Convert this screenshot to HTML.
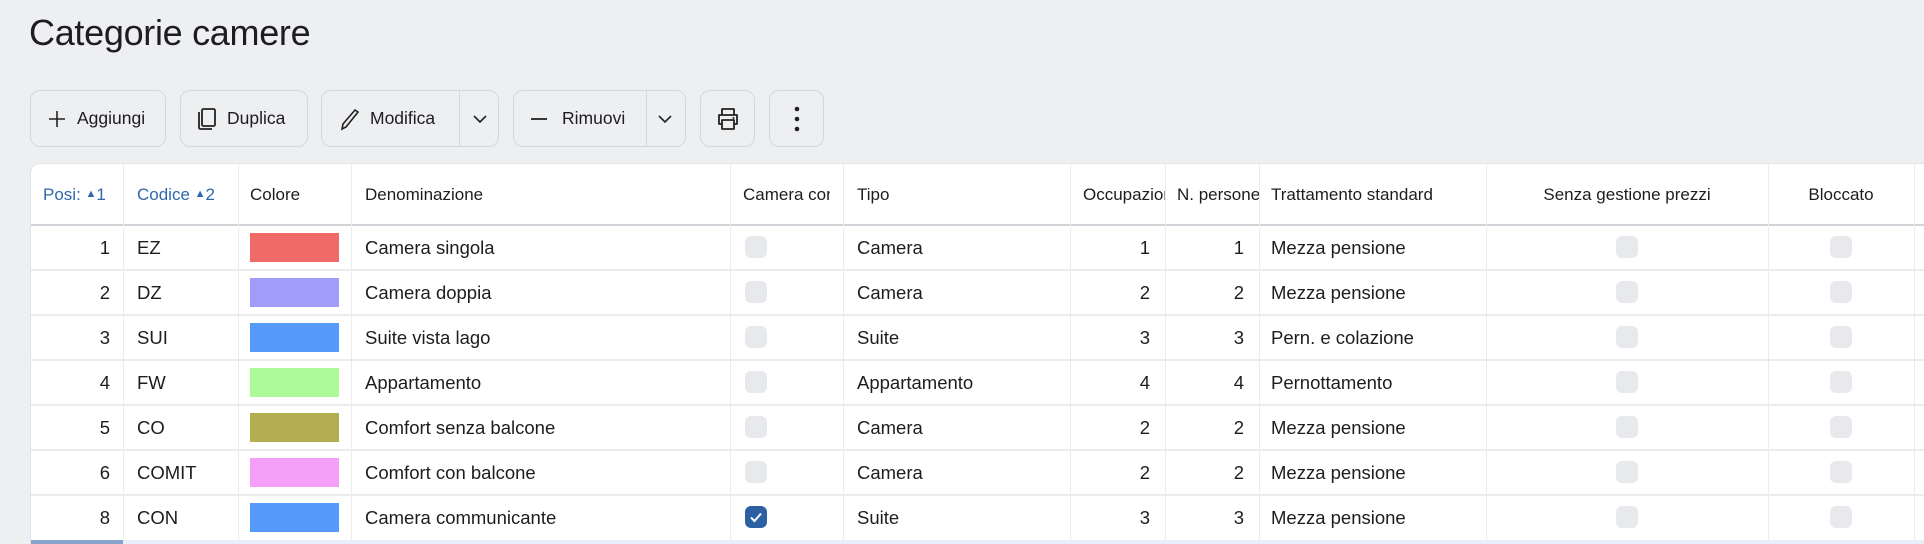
<!DOCTYPE html>
<html><head><meta charset="utf-8"><style>
*{box-sizing:border-box;margin:0;padding:0}
html,body{width:1924px;height:544px;overflow:hidden}
body{background:#eeeff1;font-family:"Liberation Sans",sans-serif;color:#1d1d1f;position:relative}
h1{position:absolute;left:29px;top:12px;font-size:36px;font-weight:400;letter-spacing:-0.3px}
.btn{position:absolute;top:90px;height:57px;border:1px solid #d6d7db;border-radius:10px;background:#eeeff1;display:flex;align-items:center;font-size:17.5px}
.btn svg{flex:none}
.div{position:absolute;top:0;bottom:0;width:1px;background:#d6d7db}
.tbl{position:absolute;left:30px;top:163px;width:1900px;height:381px;overflow:hidden;background:#fff;border-top-left-radius:10px;border:1px solid #e3e3e6;border-bottom:none}
.c{position:absolute;font-size:18.5px;white-space:nowrap;overflow:hidden}
.h{position:absolute;font-size:17px;white-space:nowrap;overflow:hidden;top:0;height:61px;line-height:61px}
.vl{position:absolute;width:1px;background:#ececef;top:0;height:380px}
.hl{position:absolute;left:0;right:0;height:2px;background:#ececef}
.sw{position:absolute;width:89px;height:29px}
.cb{position:absolute;width:22px;height:22px;border-radius:6px;background:#e8e9ed}
</style></head><body>
<h1>Categorie camere</h1>

<div class="btn" style="left:30px;width:136px;padding-left:16px;gap:10px">
<svg width="20" height="20" viewBox="0 0 20 20"><path d="M10 2v16M2 10h16" stroke="#222" stroke-width="1.6"/></svg>Aggiungi</div>
<div class="btn" style="left:180px;width:128px;padding-left:16px;gap:10px">
<svg width="20" height="24" viewBox="0 0 20 24"><rect x="5" y="2" width="13" height="17" rx="1.5" fill="none" stroke="#222" stroke-width="1.8"/><path d="M2 5v15.5a1.5 1.5 0 0 0 1.5 1.5H15" fill="none" stroke="#222" stroke-width="1.8"/></svg>Duplica</div>
<div class="btn" style="left:321px;width:178px;padding-left:16px;gap:10px">
<svg width="22" height="24" viewBox="0 0 22 24"><path d="M4 22l1-5L17 3l3 2L8 20z" fill="none" stroke="#222" stroke-width="1.6"/></svg>Modifica
<div class="div" style="left:137px"></div>
<svg style="position:absolute;left:150px;top:22px" width="16" height="12" viewBox="0 0 16 12"><path d="M2 3l6 6 6-6" fill="none" stroke="#222" stroke-width="1.6"/></svg></div>
<div class="btn" style="left:513px;width:173px;padding-left:16px;gap:14px">
<svg width="18" height="20" viewBox="0 0 18 20"><path d="M1 10h16" stroke="#222" stroke-width="1.8"/></svg>Rimuovi
<div class="div" style="left:132px"></div>
<svg style="position:absolute;left:143px;top:22px" width="16" height="12" viewBox="0 0 16 12"><path d="M2 3l6 6 6-6" fill="none" stroke="#222" stroke-width="1.6"/></svg></div>
<div class="btn" style="left:700px;width:55px;justify-content:center">
<svg width="24" height="24" viewBox="0 0 24 24"><path d="M6 8V2h12v6M6 17H3v-9h18v9h-3M6 13h12v9H6z" fill="none" stroke="#222" stroke-width="1.8" stroke-linejoin="round"/><circle cx="17.5" cy="11" r="1" fill="#222"/></svg></div>
<div class="btn" style="left:769px;width:55px;justify-content:center">
<svg width="6" height="26" viewBox="0 0 6 26"><circle cx="3" cy="3" r="2.3" fill="#222"/><circle cx="3" cy="13" r="2.3" fill="#222"/><circle cx="3" cy="23" r="2.3" fill="#222"/></svg></div>

<div class="tbl">
<div class="hl" style="top:60px;background:#d2d3d8"></div>
<div class="vl" style="left:92px"></div><div class="vl" style="left:207px"></div><div class="vl" style="left:320px"></div><div class="vl" style="left:699px"></div><div class="vl" style="left:812px"></div><div class="vl" style="left:1039px"></div><div class="vl" style="left:1134px"></div><div class="vl" style="left:1228px"></div><div class="vl" style="left:1455px"></div><div class="vl" style="left:1737px"></div><div class="vl" style="left:1883px"></div>

<div class="h" style="left:12px;width:78px;color:#2f67ad">Posi: <span style="font-size:11px;vertical-align:3px">▲</span>1</div>
<div class="h" style="left:106px;width:100px;color:#2f67ad">Codice <span style="font-size:11px;vertical-align:3px">▲</span>2</div>
<div class="h" style="left:219px">Colore</div>
<div class="h" style="left:334px">Denominazione</div>
<div class="h" style="left:712px;width:87px">Camera comunicante</div>
<div class="h" style="left:826px">Tipo</div>
<div class="h" style="left:1052px;width:82px">Occupazione</div>
<div class="h" style="left:1146px;width:82px">N. persone</div>
<div class="h" style="left:1240px">Trattamento standard</div>
<div class="h" style="left:1455px;width:282px;text-align:center">Senza gestione prezzi</div>
<div class="h" style="left:1737px;width:146px;text-align:center">Bloccato</div>

<div id="rows"></div>
</div>
<div style="position:absolute;left:31px;top:540px;width:1893px;height:4px;background:#e8f0fb"></div>
<div style="position:absolute;left:31px;top:540px;width:92px;height:4px;background:#86a3c9"></div>

<script>
var d=[["1","EZ","#f06b68","Camera singola",0,"Camera","1","Mezza pensione"],
["2","DZ","#a09cfa","Camera doppia",0,"Camera","2","Mezza pensione"],
["3","SUI","#569bfb","Suite vista lago",0,"Suite","3","Pern. e colazione"],
["4","FW","#acfb9a","Appartamento",0,"Appartamento","4","Pernottamento"],
["5","CO","#b3ae4f","Comfort senza balcone",0,"Camera","2","Mezza pensione"],
["6","COMIT","#f4a0f8","Comfort con balcone",0,"Camera","2","Mezza pensione"],
["8","CON","#569bfb","Camera communicante",1,"Suite","3","Mezza pensione"]];
var h="";
d.forEach(function(r,i){var t=61+i*45;
if(i>0)h+='<div class="hl" style="top:'+(t-1)+'px"></div>';
var ly='top:'+t+'px;height:45px;line-height:45px;';
h+='<div class="c" style="'+ly+'left:0;width:79px;text-align:right">'+r[0]+'</div>';
h+='<div class="c" style="'+ly+'left:106px">'+r[1]+'</div>';
h+='<div class="sw" style="top:'+(t+8)+'px;left:219px;background:'+r[2]+'"></div>';
h+='<div class="c" style="'+ly+'left:334px">'+r[3]+'</div>';
h+=r[4]?'<div class="cb" style="top:'+(t+11)+'px;left:714px;background:#2d5fa3"><svg width="22" height="22" viewBox="0 0 22 22"><path d="M6 11.5l3.5 3.5L16 7.5" fill="none" stroke="#fff" stroke-width="2"/></svg></div>':'<div class="cb" style="top:'+(t+11)+'px;left:714px"></div>';
h+='<div class="c" style="'+ly+'left:826px">'+r[5]+'</div>';
h+='<div class="c" style="'+ly+'left:1039px;width:80px;text-align:right">'+r[6]+'</div>';
h+='<div class="c" style="'+ly+'left:1134px;width:79px;text-align:right">'+r[6]+'</div>';
h+='<div class="c" style="'+ly+'left:1240px">'+r[7]+'</div>';
h+='<div class="cb" style="top:'+(t+11)+'px;left:1585px"></div>';
h+='<div class="cb" style="top:'+(t+11)+'px;left:1799px"></div>';
});
document.getElementById("rows").innerHTML=h;
</script>
</body></html>
